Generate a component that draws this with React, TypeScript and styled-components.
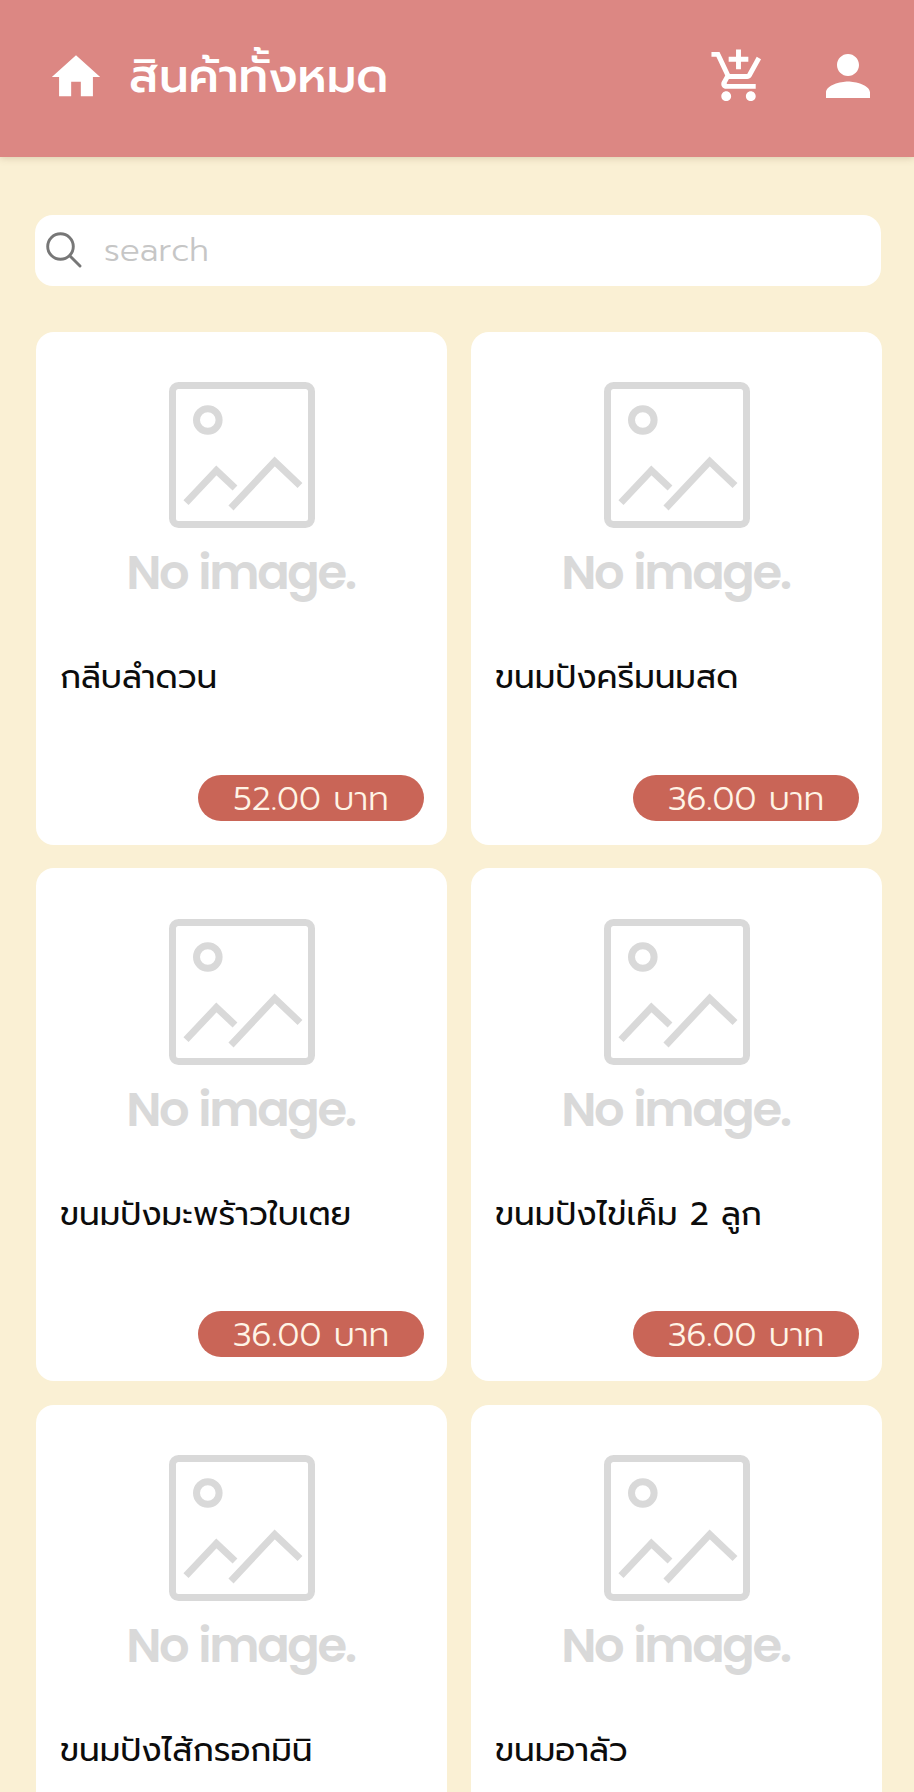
import React from "react";
import styled, { createGlobalStyle } from "styled-components";
import { MdHome, MdAddShoppingCart, MdPerson } from "react-icons/md";

const GlobalStyle = createGlobalStyle`
  * { box-sizing: border-box; }
  html, body { margin: 0; padding: 0; }
  body {
    background: #faf0d4;
    font-family: Prompt, Kanit, "Noto Sans Thai", Inter, sans-serif;
    overflow: hidden;
  }
`;

const Page = styled.div`
  width: 914px;
  height: 1792px;
  overflow: hidden;
  background: #faf0d4;
`;

const Header = styled.header`
  display: flex;
  align-items: center;
  height: 157px;
  padding: 0 33px 4px 47px;
  color: #fff;
  background: #dc8783;
  box-shadow: 0 1px 7px rgba(120, 90, 50, 0.25);
`;

const Title = styled.h1`
  flex: 1;
  margin: 0 0 0 24px;
  font-size: 46.7px;
  line-height: 60px;
  font-weight: 500;
  white-space: nowrap;
`;

const Actions = styled.nav`
  display: flex;
  align-items: center;
  gap: 47px;
  padding-bottom: 1px;
`;

const SearchBar = styled.label`
  display: flex;
  align-items: center;
  width: 846px;
  height: 71px;
  margin: 58px 0 46px 35px;
  padding: 0 0 1px 9px;
  border-radius: 18px;
  background: #fff;
`;

const SearchInput = styled.input`
  flex: 1;
  margin-left: 20px;
  padding: 0;
  border: 0;
  outline: 0;
  background: transparent;
  font: 300 33px Prompt, Inter, sans-serif;
  &::placeholder { color: #c6c6c6; opacity: 1; }
`;

const Grid = styled.main`
  display: grid;
  grid-template-columns: 411px 411px;
  grid-auto-rows: 513px;
  gap: 23.4px 24px;
  padding-left: 36px;
`;

const Card = styled.article`
  display: flex;
  flex-direction: column;
  padding: 50.4px 23px 24px 24px;
  border-radius: 18px;
  background: #fff;
`;

const Picture = styled.figure`
  display: flex;
  flex-direction: column;
  align-items: center;
  height: 250px;
  margin: 0;
  color: #d9d9d9;
`;

const Caption = styled.figcaption`
  margin: 15px 3px 0 0;
  font: 600 48px/60px Poppins, Inter, sans-serif;
  letter-spacing: -2.4px;
  word-spacing: 2px;
  white-space: nowrap;
`;

const Name = styled.h2`
  margin: 20px 0 0;
  font-size: 32.75px;
  line-height: 50px;
  font-weight: 400;
  color: #0c0c0c;
  white-space: nowrap;
`;

const Price = styled.div`
  display: flex;
  align-items: center;
  justify-content: center;
  align-self: flex-end;
  width: 226px;
  height: 46px;
  margin-top: auto;
  padding-top: 1px;
  border-radius: 23px;
  color: #fff4e6;
  background: #c96557;
  font-size: 33px;
  font-weight: 300;
  white-space: nowrap;
`;

const PlaceholderIcon = () => (
  <svg width="146" height="146" viewBox="0 0 146 146" fill="none" stroke="currentColor" strokeWidth="7">
    <rect x="3.5" y="3.5" width="139" height="139" rx="6" />
    <circle cx="38.8" cy="38" r="11.3" />
    <path d="M17 120.7 47.4 88.4 66 106" />
    <path d="M62 126 105.7 79.4 131 103.5" />
  </svg>
);

const SearchIcon = () => (
  <svg width="40" height="40" viewBox="0 0 40 40" fill="none" stroke="#777" strokeWidth="2.9" strokeLinecap="round">
    <circle cx="16.5" cy="16.5" r="12.8" />
    <path d="M26 26 36 36" />
  </svg>
);

const products = [
  { name: "กลีบลำดวน", price: "52.00" },
  { name: "ขนมปังครีมนมสด", price: "36.00" },
  { name: "ขนมปังมะพร้าวใบเตย", price: "36.00" },
  { name: "ขนมปังไข่เค็ม 2 ลูก", price: "36.00" },
  { name: "ขนมปังไส้กรอกมินิ" },
  { name: "ขนมอาลัว" },
];

export default function App() {
  return (
    <Page>
      <GlobalStyle />
      <Header>
        <MdHome size={58} />
        <Title>สินค้าทั้งหมด</Title>
        <Actions>
          <MdAddShoppingCart size={59} />
          <MdPerson size={66} />
        </Actions>
      </Header>
      <SearchBar>
        <SearchIcon />
        <SearchInput placeholder="search" />
      </SearchBar>
      <Grid>
        {products.map((p) => (
          <Card key={p.name}>
            <Picture>
              <PlaceholderIcon />
              <Caption>No image.</Caption>
            </Picture>
            <Name>{p.name}</Name>
            {p.price && <Price>{p.price} บาท</Price>}
          </Card>
        ))}
      </Grid>
    </Page>
  );
}
